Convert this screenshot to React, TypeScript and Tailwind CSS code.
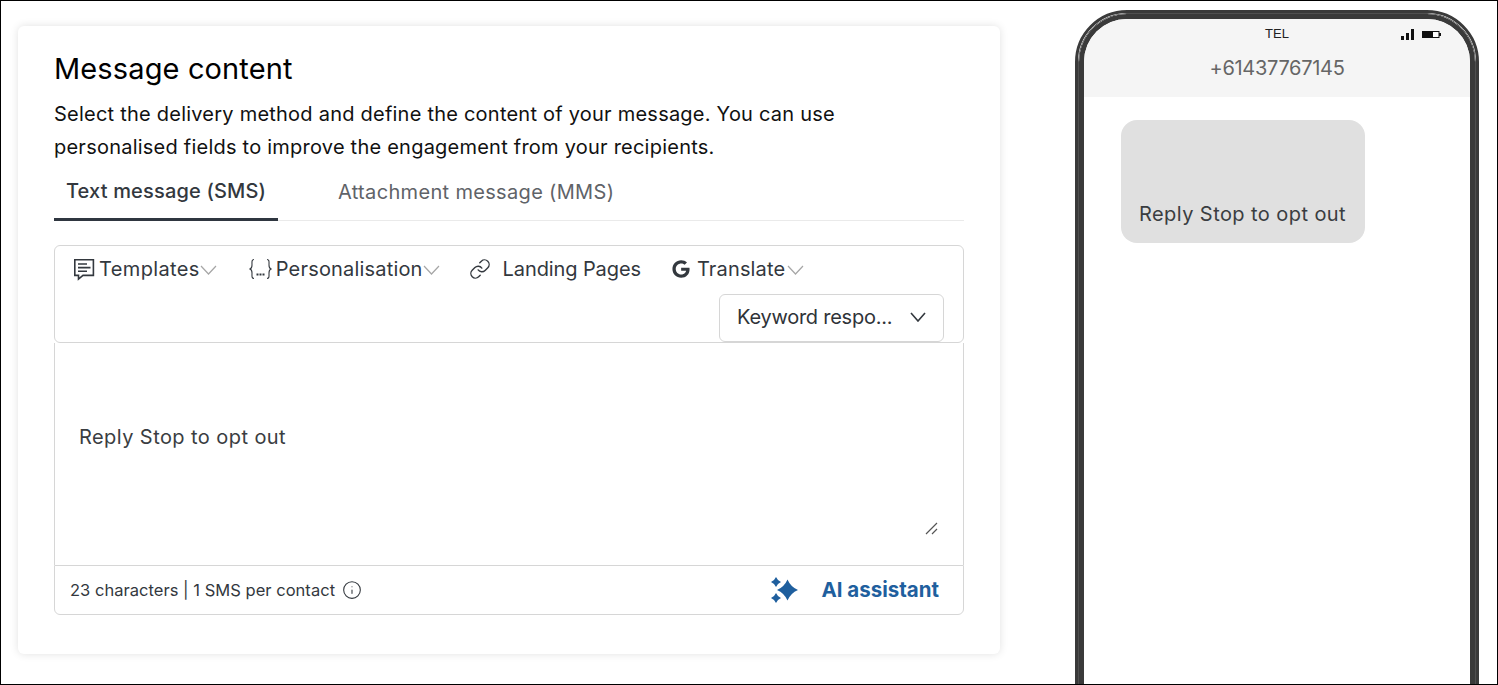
import React from "react";
import { Info, Link } from "lucide-react";
import { FaGoogle } from "react-icons/fa";

const font = "font-['Inter','Noto_Sans',sans-serif]";

function Caret() {
  return (
    <svg width="17" height="10" viewBox="0 0 17 10" fill="none" stroke="#a6a6a6" strokeWidth="1.2" className="mt-[3px]">
      <path d="M1 1l7.5 8L16 1" />
    </svg>
  );
}

function Star({ cx, cy, r }: { cx: number; cy: number; r: number }) {
  const k = r * 0.3;
  return (
    <path
      d={`M${cx} ${cy - r}Q${cx + k} ${cy - k} ${cx + r} ${cy}Q${cx + k} ${cy + k} ${cx} ${cy + r}Q${cx - k} ${cy + k} ${cx - r} ${cy}Q${cx - k} ${cy - k} ${cx} ${cy - r}Z`}
      fill="#1f5f9e"
    />
  );
}

export default function App() {
  return (
    <div className={`${font} w-[1498px] h-[685px] border border-black bg-white overflow-hidden flex items-start text-[#2f3338]`}>
      <div className="ml-[17px] mt-[25px] w-[982px] h-[628px] bg-white rounded-md shadow-[0_0_8px_rgba(0,0,0,0.12)] pl-9 pr-9 pt-[25px] shrink-0">
        <h1 className="text-[29px] leading-[36px] text-black tracking-[0.13px]">Message content</h1>
        <p className="mt-[11px] text-[20px] leading-[33px] text-[#111] w-[800px] tracking-[0.23px]">
          Select the delivery method and define the content of your message. You can use personalised fields to improve the engagement from your recipients.
        </p>
        <div className="flex border-b border-[#eaeaea] h-[57px]">
          <div className="w-[224px] border-b-[3px] border-[#2f3640] h-[57px] flex items-center justify-center text-[20px] font-medium text-[#33383e] tracking-[0.17px]">
            Text message (SMS)
          </div>
          <div className="ml-[60px] h-[55px] flex items-center text-[20px] text-[#5f6368] tracking-[0.33px]">Attachment message (MMS)</div>
        </div>
        <div className="mt-[24px] w-[910px]">
          <div className="h-[98px] border border-[#d6d6d6] rounded-md relative">
            <div className="flex items-center h-[48px] pb-[3px] pl-[17px] text-[20px] text-[#33383e]">
              <svg width="24" height="24" viewBox="0 0 24 24" fill="none" stroke="#33383e" strokeWidth="1.6">
                <path d="M2.8 2.8h18.6v15.6H11l-4.5 3.6v-3.6H2.8z" />
                <path d="M6 7h9M6 10.6h12.5M6 14.2h9" />
              </svg>
              <span className="ml-[3px] tracking-[0.37px]">Templates</span>
              <Caret />
              <svg width="23" height="22" viewBox="0 0 23 22" fill="none" stroke="#33383e" strokeWidth="1.1" className="ml-[32px]">
                <path d="M5 1.500C2.500 1.500 3 4 3 7c0 2.500-.5 3.500-2 4 1.500.5 2 1.500 2 4 0 3-.5 5.500 2 5.500" />
                <path d="M18 1.500c2.500 0 2 2.500 2 5.500 0 2.500.5 3.500 2 4-1.500.5-2 1.500-2 4 0 3 .5 5.500-2 5.500" />
                <path d="M7.500 16.500h2M10.500 16.500h2M13.500 16.500h2" strokeWidth="2.200" />
              </svg>
              <span className="ml-[4px] tracking-[0.18px]">Personalisation</span>
              <Caret />
              <Link className="ml-[29px] w-[22px] h-[22px] text-[#33383e]" strokeWidth={1.5} />
              <span className="ml-[12px] tracking-[-0.1px]">Landing Pages</span>
              <FaGoogle className="ml-[31px] w-[18px] h-[18px] text-[#33383e]" />
              <span className="ml-[7px] tracking-[0.15px]">Translate</span>
              <span className="ml-[2px] flex">
                <Caret />
              </span>
            </div>
            <div className="flex justify-end pr-[19px]">
              <div className="w-[225px] h-[48px] border border-[#d6d6d6] rounded-md bg-white flex items-center justify-between pl-[17px] pr-[17px] pb-[2px] text-[20px] tracking-[-0.25px]">
                <span>Keyword respo...</span>
                <svg width="16" height="10" viewBox="0 0 16 10" fill="none" stroke="#33383e" strokeWidth="1.6">
                  <path d="M1 1l7 8 7-8" />
                </svg>
              </div>
            </div>
          </div>
          <div className="h-[222px] border-x border-[#d6d6d6] relative pl-[24px] pt-[80px] text-[20px] leading-[28px] tracking-[0.43px] text-[#3a3d41]">
            <span>Reply Stop to opt out</span>
            <svg className="absolute right-[25px] bottom-[30px]" width="13" height="13" viewBox="0 0 13 13" stroke="#555" strokeWidth="1.2">
              <path d="M1 12 12 1M7 12l5-5" />
            </svg>
          </div>
          <div className="h-[50px] border border-[#d6d6d6] rounded-b-md flex items-center justify-between pl-[15px] pr-[24px]">
            <div className="flex items-center text-[16.5px] tracking-[0.03px] text-[#33383e]">
              <span>23 characters | 1 SMS per contact</span>
              <Info className="ml-[7px] w-[20px] h-[20px]" strokeWidth={1.3} />
            </div>
            <div className="flex items-center text-[20.5px] font-bold text-[#1f5f9e]">
              <svg width="29" height="29" viewBox="0 0 29 29">
                <Star cx={17.5} cy={14} r={10.5} />
                <Star cx={6} cy={6} r={5} />
                <Star cx={6} cy={22} r={5} />
              </svg>
              <span className="ml-[22px]">AI assistant</span>
            </div>
          </div>
        </div>
      </div>
      <div className="ml-[75px] mt-[9px] w-[404px] h-[800px] shrink-0 border-[3px] border-[#3a3a3a] rounded-[52px] overflow-hidden">
        <div className="h-full border border-[#505050] rounded-[49px] overflow-hidden">
          <div className="h-full border-[5px] border-[#3a3a3a] rounded-[48px] overflow-hidden bg-white">
            <div className="h-[78px] bg-[#f5f5f5] relative flex flex-col items-center">
              <div className="absolute right-[29px] top-[10px] flex items-center gap-[8px]">
                <svg width="13" height="11" viewBox="0 0 13 11" fill="#111">
                  <rect x="0" y="7" width="3" height="4" />
                  <rect x="5" y="4" width="3" height="7" />
                  <rect x="10" y="0" width="3" height="11" />
                </svg>
                <svg width="19" height="7" viewBox="0 0 19 7">
                  <rect x="0.5" y="0.5" width="16.500" height="6" fill="#fff" stroke="#111" />
                  <rect x="1" y="0.500" width="10" height="6" fill="#111" />
                  <rect x="17" y="2" width="2" height="3" fill="#111" />
                </svg>
              </div>
              <div className="mt-[6px] font-['Liberation_Sans',sans-serif] text-[13px] leading-[18px] text-[#222]">TEL</div>
              <div className="mt-[11px] text-[20px] leading-[28px] text-[#666] tracking-[-0.3px]">+61437767145</div>
            </div>
            <div className="ml-[37px] mt-[23px] w-[244px] h-[123px] rounded-2xl bg-[#e0e0e0] flex items-end pl-[18px] pb-[15px] text-[20px] leading-[28px] tracking-[0.43px] text-[#3a3d41]">
              Reply Stop to opt out
            </div>
          </div>
        </div>
      </div>
    </div>
  );
}
